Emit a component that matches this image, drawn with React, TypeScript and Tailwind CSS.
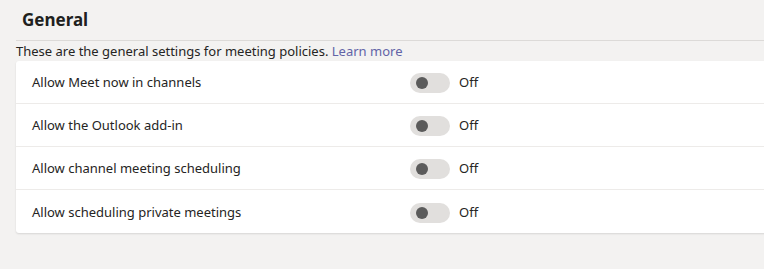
const rows = [
  "Allow Meet now in channels",
  "Allow the Outlook add-in",
  "Allow channel meeting scheduling",
  "Allow scheduling private meetings",
];

function Toggle() {
  return (
    <div className="flex items-center">
      <div className="flex h-5 w-10 items-center rounded-full bg-[#e1dfdd] pl-[6px]">
        <div className="h-3 w-3 rounded-full bg-[#5b5b5b]" />
      </div>
      <span className="ml-[9px] text-[13px] text-[#252423]">Off</span>
    </div>
  );
}

export default function App() {
  return (
    <div
      className="h-[269px] w-[764px] overflow-hidden bg-[#f3f2f1] pl-4"
      style={{ fontFamily: '"Noto Sans", "Open Sans", sans-serif' }}
    >
      <h2 className="flex h-[41px] items-center border-b border-[#dcdad8] pl-[6px] text-[17px] font-bold text-[#201f1e]">
        General
      </h2>
      <p className="flex h-5 items-center pt-[2px] text-[13px] text-[#252423]">
        These are the general settings for meeting policies.&nbsp;
        <span className="text-[#6264a7]">Learn more</span>
      </p>
      <div className="w-[760px] rounded-[3px] bg-white shadow-[0_1px_2px_rgba(0,0,0,0.12)]">
        {rows.map((label, i) => (
          <div
            key={label}
            className={`flex h-[43px] items-center pt-[2px] ${i < rows.length - 1 ? "border-b border-[#edebe9]" : ""}`}
          >
            <span className="w-[394px] pl-4 text-[13px] text-[#252423]">{label}</span>
            <Toggle />
          </div>
        ))}
      </div>
    </div>
  );
}
